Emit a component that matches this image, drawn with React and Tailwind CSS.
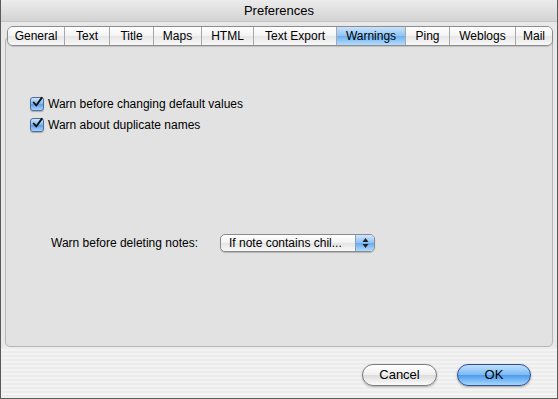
import React from 'react';

const tabs = [
  ['General', 'w-[56px]'],
  ['Text', 'w-[45px]'],
  ['Title', 'w-[44px]'],
  ['Maps', 'w-[48px]'],
  ['HTML', 'w-[52px]'],
  ['Text Export', 'w-[83px]'],
  ['Warnings', 'w-[69px]'],
  ['Ping', 'w-[44px]'],
  ['Weblogs', 'w-[66px]'],
  ['Mail', 'w-[37px]'],
];

function Check({ label }) {
  return (
    <div className="flex items-center gap-[4px] h-[21px]">
      <span className="w-[14px] h-[14px] rounded-[3px] border border-[#4a6fa0] bg-[linear-gradient(#cfe6fb,#7fb6ee_50%,#5a9de6_51%,#a9d3fb)] flex items-center justify-center shadow-[0_1px_1px_rgba(0,0,0,0.25)]">
        <svg width="13" height="13" viewBox="0 0 13 13" className="-mt-[2px] ml-[1px]">
          <path d="M2 6.5 L5 10 L11.5 1" fill="none" stroke="#111" strokeWidth="2.2" strokeLinecap="round" strokeLinejoin="round" />
        </svg>
      </span>
      <span>{label}</span>
    </div>
  );
}

export default function App() {
  return (
    <div className="w-[558px] h-[399px] flex flex-col border-l border-b border-r border-[#5a5a5a] bg-[#e8e8e8] text-[12px] text-black overflow-hidden" style={{ fontFamily: '"Liberation Sans", Arial, sans-serif' }}>
      <div className="h-[22px] shrink-0 flex items-center justify-center text-[13px] bg-[linear-gradient(#ececec,#d3d3d3)] border-b border-[#c4c4c4]">
        Preferences
      </div>
      <div className="flex-1 flex flex-col px-[4px] pt-[4px]">
        <div className="relative z-10 flex pl-[2px] h-[20px] -mb-[10px]">
          <div className="flex rounded-[6px] border border-[#8c8c8c] overflow-hidden shadow-[0_1px_1px_rgba(0,0,0,0.15)]">
            {tabs.map(([t, w], i) => (
              <div
                key={t}
                className={`${w} h-[18px] flex items-center justify-center ${i > 0 ? 'border-l border-[#a8a8a8]' : ''} ${t === 'Warnings' ? 'bg-[linear-gradient(#c9e3fb,#8fc3f5_50%,#6cb0f2_51%,#b6dcfd)]' : 'bg-[linear-gradient(#ffffff,#f3f3f3_50%,#e6e6e6_51%,#f7f7f7)]'}`}
              >
                {t}
              </div>
            ))}
          </div>
        </div>
        <div className="h-[311px] rounded-[5px] border border-[#b6b6b6] bg-[#e2e2e2] flex flex-col px-[24px] pt-[56px]">
          <Check label="Warn before changing default values" />
          <Check label="Warn about duplicate names" />
          <div className="flex items-center mt-[99px] pl-[21px]">
            <span className="w-[169px]">Warn before deleting notes:</span>
            <div className="w-[155px] h-[18px] flex items-center rounded-[5px] border border-[#8a8a8a] bg-[linear-gradient(#ffffff,#f1f1f1_50%,#e4e4e4_51%,#f9f9f9)] overflow-hidden shadow-[0_1px_1px_rgba(0,0,0,0.2)]">
              <span className="flex-1 pl-[8px]">If note contains chil...</span>
              <span className="w-[19px] h-full flex items-center justify-center bg-[linear-gradient(#cfe6fb,#8dc1f3_50%,#67abef_51%,#b4dbfc)] border-l border-[#7f9fc4]">
                <svg width="7" height="12" viewBox="0 0 7 12">
                  <path d="M3.5 1 L6.5 5 L0.5 5 Z" fill="#222" />
                  <path d="M3.5 11 L6.5 7 L0.5 7 Z" fill="#222" />
                </svg>
              </span>
            </div>
          </div>
        </div>
        <div className="flex-1 flex justify-end items-start gap-[20px] pt-[17px] pl-[4px] pr-[26px] -mx-[4px] bg-[repeating-linear-gradient(#ececec_0px,#ececec_2px,#f3f3f3_2px,#f3f3f3_4px)]">
          <button className="w-[75px] h-[22px] rounded-full border border-[#7c7c7c] bg-[linear-gradient(#ffffff,#f0f0f0_50%,#dcdcdc_51%,#fbfbfb)] text-[13px] shadow-[0_1px_2px_rgba(0,0,0,0.3)]">
            Cancel
          </button>
          <button className="w-[74px] h-[22px] rounded-full border border-[#2f4f9a] bg-[linear-gradient(#bfe0fd,#7bb9f4_50%,#4c9bea_51%,#a6d7ff)] text-[13px] shadow-[0_1px_2px_rgba(0,0,0,0.35)]">
            OK
          </button>
        </div>
      </div>
    </div>
  );
}
